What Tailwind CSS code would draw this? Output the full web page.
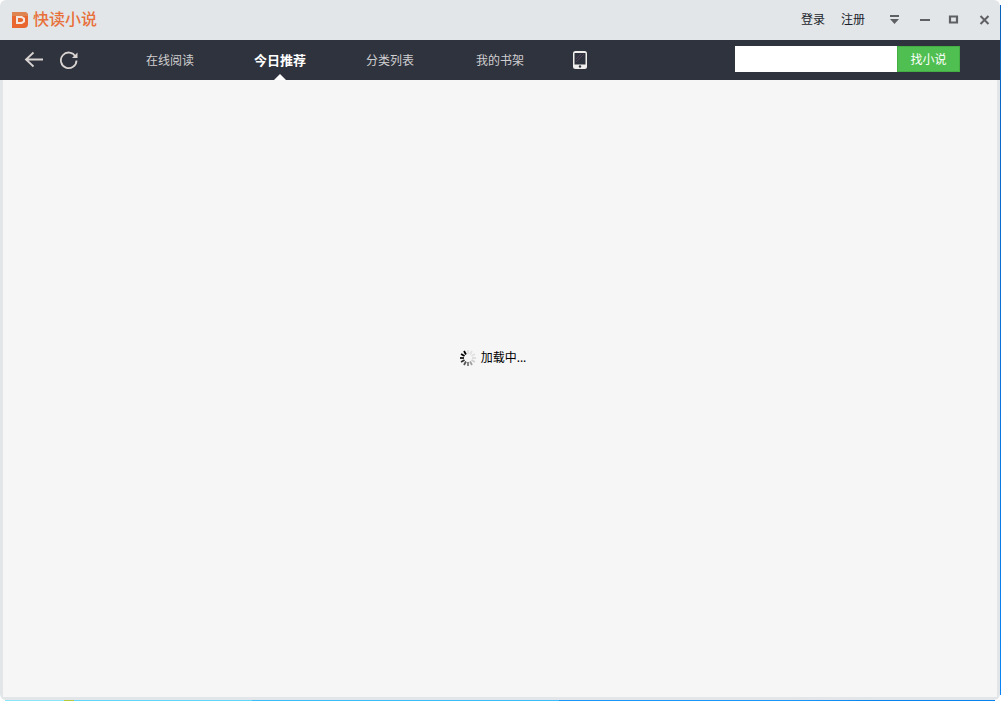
<!DOCTYPE html>
<html lang="zh-CN">
<head>
<meta charset="utf-8">
<title>快读小说</title>
<script src="https://cdn.jsdelivr.net/npm/@tailwindcss/browser@4"></script>
</head>
<body class="grid h-screen grid-cols-[minmax(0,1fr)_1px] grid-rows-[minmax(0,1fr)_1px] overflow-hidden bg-white font-['Noto_Sans','Noto_Sans_CJK_SC',sans-serif] text-xs">
  <div class="flex flex-col overflow-hidden rounded-md bg-[#e2e6e9]">
    <header class="flex h-10 shrink-0 items-center justify-between pr-px pl-3 text-[#1c1e2c]">
      <h1 class="flex items-center gap-[5px] pb-px text-base leading-5 font-medium text-[#e8703a] font-['Noto_Sans_CJK_SC',sans-serif]">
        <svg class="size-4" viewBox="0 0 16 16" aria-hidden="true"><path fill="#e9662f" d="M0 0h12a4 4 0 0 1 4 4v8a4 4 0 0 1-4 4H0z"/><path fill="#de8450" d="M0 0h12a4 4 0 0 1 4 4H0z"/><path fill="#f3e6df" fill-rule="evenodd" d="M4 4h6l3 2v4l-3 2H4zM6 6v4h3l2-1V7L9 6z"/></svg>
        <span class="-mt-1 -mb-px">快读小说</span>
      </h1>
      <div class="flex items-center">
        <a href="#" class="mr-4">登录</a>
        <a href="#" class="mr-[14px]">注册</a>
        <button class="grid size-[30px] place-items-center" aria-label="菜单"><svg class="size-3" viewBox="0 0 12 12" fill="#5f6064" aria-hidden="true"><path d="M2 1h9v2H2zM2 5h9L6.500 10z"/></svg></button>
        <button class="grid size-[30px] place-items-center" aria-label="最小化"><svg class="size-3" viewBox="0 0 12 12" fill="#5f6064" aria-hidden="true"><path d="M2 5h10v2H2z"/></svg></button>
        <button class="grid size-[30px] place-items-center" aria-label="最大化"><svg class="size-3" viewBox="0 0 12 12" aria-hidden="true"><path d="M2 2.500h7v6H2z" fill="none" stroke="#5f6064" stroke-width="2.200"/></svg></button>
        <button class="grid size-[30px] place-items-center" aria-label="关闭"><svg class="size-3" viewBox="0 0 12 12" aria-hidden="true"><path d="m2.500 2 8 8m0-8-8 8" fill="none" stroke="#5f6064" stroke-width="2"/></svg></button>
      </div>
    </header>

    <nav class="flex h-10 shrink-0 items-center justify-between bg-[#2f333d] pr-10 pl-6 text-[#cfcfd1]">
      <div class="flex h-full items-center">
        <button class="mr-4" aria-label="后退"><svg class="h-5 w-5" viewBox="0 0 20 20" fill="none" stroke="#d9d4d2" stroke-width="1.8" aria-hidden="true"><path d="M2 9.500h17M9.500 2.500l-7.500 7 7.500 7"/></svg></button>
        <button class="mr-[37px]" aria-label="刷新"><svg class="h-5 w-[18px]" viewBox="0 0 18 20" fill="none" aria-hidden="true"><path d="M15.500 6.500A7.800 7.800 0 1 0 16.500 10.500" stroke="#d9d4d2" stroke-width="1.800"/><path d="M17.500 2.500v5.500h-5.500z" fill="#d9d4d2"/></svg></button>
        <a href="#" class="flex h-full w-[110px] items-center justify-center pt-[2px]">在线阅读</a>
        <a href="#" aria-current="page" class="relative flex h-full w-[110px] items-center justify-center pt-[2px] text-[13px] font-bold text-white">今日推荐<svg class="absolute bottom-0 left-1/2 h-[6px] w-3 -translate-x-1/2" viewBox="0 0 12 6" aria-hidden="true"><path d="M0 6 6 0l6 6z" fill="#fff"/></svg></a>
        <a href="#" class="flex h-full w-[110px] items-center justify-center pt-[2px]">分类列表</a>
        <a href="#" class="flex h-full w-[110px] items-center justify-center pt-[2px]">我的书架</a>
        <a href="#" class="flex h-full w-[50px] items-center justify-center" aria-label="手机版"><svg class="h-[18px] w-[14px]" viewBox="0 0 14 18" aria-hidden="true"><rect width="14" height="18" rx="2.500" fill="#f1efee"/><path fill="#2f333d" d="M1.500 2h11v11.500h-11z"/><path d="m3 8 5-5M3 11l8-8" stroke="#56405a" stroke-width="1"/><circle cx="7" cy="15.500" r="1.200" fill="#2f333d"/></svg></a>
      </div>
      <form class="mb-[2px] flex h-[26px]">
        <input type="search" aria-label="搜索小说" class="w-[162px] bg-white px-2 text-black outline-none">
        <button type="button" class="w-[63px] border border-[#44ad43] bg-[#50bf51] pt-px text-white">找小说</button>
      </form>
    </nav>

    <main class="mx-[3px] mb-[3px] flex flex-1 items-center justify-center bg-[#f6f6f6] pr-[14px] pb-[62px] text-black">
      <p class="flex items-center gap-[5px]" role="status">
        <svg class="size-4" viewBox="-8 -8 16 16" stroke-width="1.800" stroke="#000" aria-hidden="true">
          <path d="M0-4v-4" opacity=".08"/><path d="M0-4v-4" transform="rotate(30)" opacity=".08"/><path d="M0-4v-4" transform="rotate(60)" opacity=".08"/><path d="M0-4v-4" transform="rotate(90)" opacity=".1"/><path d="M0-4v-4" transform="rotate(120)" opacity=".15"/><path d="M0-4v-4" transform="rotate(150)" opacity=".35"/><path d="M0-4v-4" transform="rotate(180)" opacity=".5"/><path d="M0-4v-4" transform="rotate(210)" opacity=".65"/><path d="M0-4v-4" transform="rotate(240)" opacity=".8"/><path d="M0-4v-4" transform="rotate(270)" opacity=".9"/><path d="M0-4v-4" transform="rotate(300)"/><path d="M0-4v-4" transform="rotate(330)"/>
        </svg>
        加载中...
      </p>
    </main>
  </div>
  <div class="mt-[5px] mb-[5px] bg-linear-to-b from-[#0a62be] to-[#0a84f5]"></div>
  <div class="mr-[5px] ml-[5px] bg-[linear-gradient(to_right,#8ce6fa_0_6%,#b8c83c_6%_7%,#5fd8fa_7%_25%,#3cbcfa_25%_56%,#1e96f5_56%_80%,#0a82f0_88%)]"></div>
</body>
</html>
